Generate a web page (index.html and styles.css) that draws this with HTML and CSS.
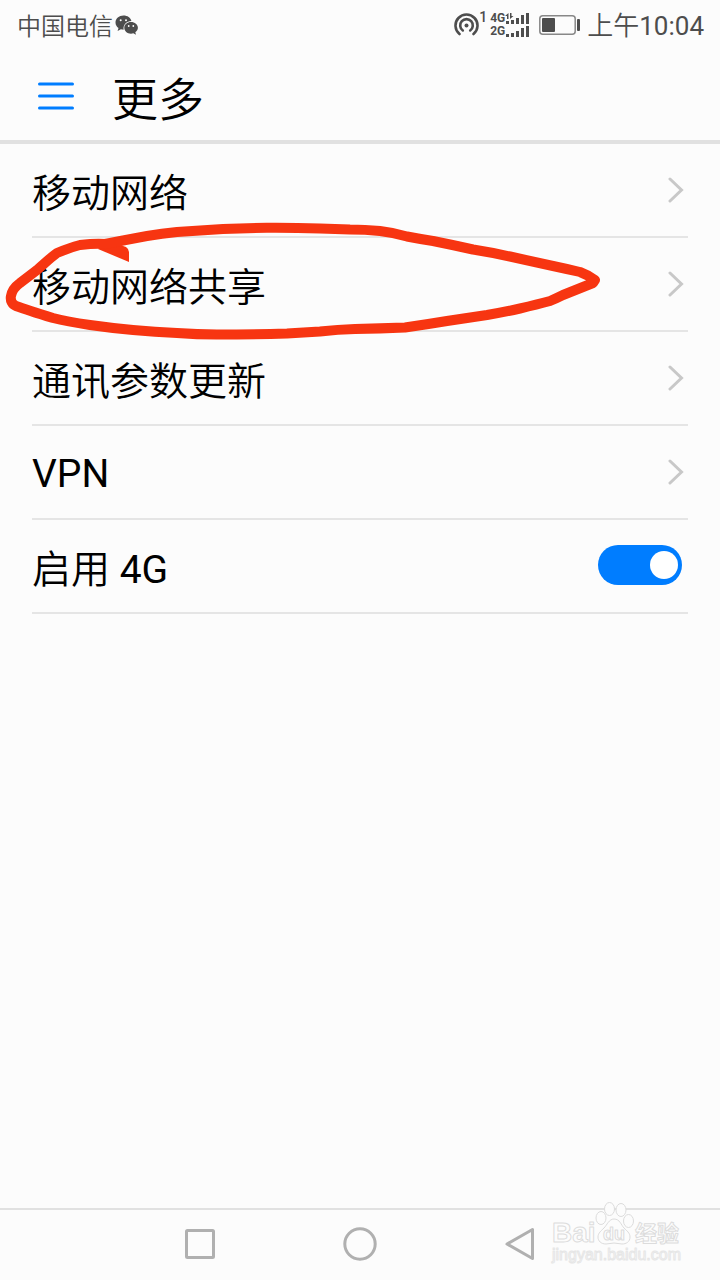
FILE: index.html
```html
<!DOCTYPE html>
<html lang="zh-CN">
<head>
<meta charset="utf-8">
<meta name="viewport" content="width=device-width, initial-scale=1">
<title>更多</title>
<link rel="stylesheet" href="styles.css">
</head>
<body>
<div class="screen">
  <div class="status">
    <div class="status-left">
      <span class="carrier">中国电信</span>
      <svg class="wechat" width="24" height="20" viewBox="0 0 24 20" aria-hidden="true">
        <path fill="#4d4d4d" d="M8.500 0.500C4 0.500 0.500 3.500 0.500 7.500c0 2.300 1.100 4.200 3 5.500L2.600 16l3.300-1.700c.9.300 1.800.4 2.700.4C8 9.500 11.500 6 16.400 6C15.600 2.700 12.500.5 8.500.5z"/>
        <path fill="#4d4d4d" d="M16 7c-3.800 0-6.700 2.500-6.700 5.800s2.900 5.900 6.700 5.900c.8 0 1.600-.1 2.300-.4l2.700 1.500-.7-2.600c1.600-1.100 2.600-2.700 2.600-4.500C22.900 9.500 19.800 7 16 7z"/>
        <g fill="#fcfcfc"><circle cx="5.700" cy="5.300" r="1"/><circle cx="11" cy="5.300" r="1"/><circle cx="13.700" cy="11" r=".9"/><circle cx="18.300" cy="11" r=".9"/></g>
      </svg>
    </div>
    <div class="status-right">
      <svg class="hotspot" width="25" height="24" viewBox="0 0 25 24" fill="none" stroke="#4d4d4d" stroke-width="2.600" stroke-linecap="round" aria-hidden="true">
        <path d="M5.500 21a11 11 0 1 1 14 0"/><path d="M8.800 17.500a6.300 6.300 0 1 1 7.400 0"/><circle cx="12.500" cy="12.500" r="2" fill="#4d4d4d" stroke="none"/>
      </svg>
      <span class="slot">1</span>
      <div class="networks">
        <div class="network"><span>4G</span>
          <svg width="24" height="11" viewBox="0 0 24 11" fill="#4d4d4d" aria-hidden="true"><path d="M3.500 0v6h-1.500V3H0zM5 0v6L8.500 3H6.500V0z"/><rect x="1" y="8" width="3" height="3"/><rect x="6" y="7" width="3" height="4"/><rect x="11" y="5" width="3" height="6"/><rect x="16" y="2" width="3" height="9"/><rect x="21" y="0" width="3" height="11"/></svg>
        </div>
        <div class="network"><span>2G</span>
          <svg width="24" height="11" viewBox="0 0 24 11" fill="#4d4d4d" aria-hidden="true"><rect x="1" y="8" width="3" height="3"/><rect x="6" y="7" width="3" height="4"/><rect x="11" y="5" width="3" height="6"/><rect x="16" y="2" width="3" height="9"/><rect x="21" y="0" width="3" height="11"/></svg>
        </div>
      </div>
      <svg class="battery" width="42" height="20" viewBox="0 0 42 20" aria-hidden="true">
        <rect x=".8" y=".8" width="35.400" height="18.400" rx="3" fill="none" stroke="#888" stroke-width="1.500"/><rect x="3" y="3" width="13" height="14" rx="1" fill="#4d4d4d"/><rect x="38" y="4" width="3" height="12" rx="1" fill="#4d4d4d"/>
      </svg>
      <time class="time"><span class="cjk">上午</span>10:04</time>
    </div>
  </div>
  <header class="header">
    <button class="menu" type="button" aria-label="菜单">
      <svg width="36" height="28" viewBox="0 0 36 28" stroke="#007dff" stroke-width="3" stroke-linecap="round" aria-hidden="true"><path d="M1.500 2h33M1.500 14h33M1.500 26h33"/></svg>
    </button>
    <h1 class="title">更多</h1>
  </header>
  <main class="list">
    <a class="row" href="#mobile"><span class="name cjk">移动网络</span><svg class="chevron" width="16" height="26" viewBox="0 0 16 26" aria-hidden="true"><path d="M2 2l11.500 11L2 24"/></svg></a>
    <a class="row" href="#sharing"><span class="name cjk">移动网络共享</span><svg class="chevron" width="16" height="26" viewBox="0 0 16 26" aria-hidden="true"><path d="M2 2l11.500 11L2 24"/></svg>
      <svg class="marker" width="604" height="128" viewBox="0 215 604 128" aria-hidden="true"><path d="M129 262L98 249L106 240L126 247Q129 249 129 252z" fill="#f73511" stroke="none"/><path d="M106 244C96 243 88 244 80 245C72 247 64 250 57 253C50 258 44 264 37 270L20 283C9 291 8 303 16 306C27 310 40 314 53 318C65 321 77 323 90 325Q111 328 133 330Q155 332 177 333Q197 334.500 217 334.500Q252 334.500 287 333.500Q304 332.500 320 331.500Q338 329.500 355 329Q380 328.500 405 327.500Q426 324.500 447 321Q467 318 487 315Q504 312 520 308.500Q537 304.500 550 301Q557 298 563 295L593 283L595 280Q588 275 580 272Q567 269 553 266L510 256.500Q492 252.500 473 249.500Q453 245 433 241Q420 239 407 236.500Q393 232.500 380 231Q365 229.500 350 229.500L320 228.500Q293 227.500 267 227.700Q245 228 223 229L177 232Q162 233.500 147 236L123 240.500L100 245"/></svg>
    </a>
    <a class="row" href="#params"><span class="name cjk">通讯参数更新</span><svg class="chevron" width="16" height="26" viewBox="0 0 16 26" aria-hidden="true"><path d="M2 2l11.500 11L2 24"/></svg></a>
    <a class="row" href="#vpn"><span class="name">VPN</span><svg class="chevron" width="16" height="26" viewBox="0 0 16 26" aria-hidden="true"><path d="M2 2l11.500 11L2 24"/></svg></a>
    <label class="row" for="lte"><span class="name"><span class="cjk">启用</span> 4G</span><input class="switch" id="lte" type="checkbox" role="switch" checked></label>
  </main>
  <nav class="nav">
    <button type="button" aria-label="最近任务"><svg width="36" height="36" viewBox="0 0 36 36"><rect x="4.500" y="4.500" width="27" height="27" rx="1"/></svg></button>
    <button type="button" aria-label="主屏幕"><svg width="36" height="36" viewBox="0 0 36 36"><circle cx="18" cy="18" r="15.200"/></svg></button>
    <button type="button" aria-label="返回"><svg width="36" height="36" viewBox="0 0 36 36"><path d="M30.500 3.500V32.500L5 18z"/></svg></button>
    <svg class="watermark" width="140" height="68" viewBox="0 0 140 68" role="img" aria-label="Baidu经验">
      <g class="mark-shape"><ellipse cx="53" cy="18" rx="5" ry="6.500"/><ellipse cx="61.500" cy="9" rx="5" ry="6.500"/><ellipse cx="73" cy="10" rx="5" ry="6.500"/><ellipse cx="80.500" cy="21" rx="5" ry="6.500"/><path d="M66 19c6 0 7 6 10 9s6 5 6 9c0 5-4 7-8 7-3 0-5-1-8-1s-5 1-8 1c-5 0-8-3-8-7s3-6 6-9 5-9 10-9z"/></g>
      <text class="mark-brand" x="4" y="42">Bai</text><text class="mark-du" x="55" y="40">du</text><text class="mark-cn" x="87" y="41">经验</text><text class="mark-url" x="4" y="60">jingyan.baidu.com</text>
    </svg>
  </nav>
</div>
</body>
</html>
```
FILE: styles.css
```css
* { box-sizing: border-box; }
body {
  margin: 0;
  background: #fcfcfc;
  color: #000;
  font-family: Roboto, "Noto Sans CJK SC", sans-serif;
}
button { border: 0; padding: 0; background: none; display: flex; align-items: center; justify-content: center; }
svg { display: block; flex: none; }
.cjk { font-family: "Noto Sans CJK SC", sans-serif; font-weight: 350; }
.screen { min-height: 100vh; display: flex; flex-direction: column; overflow: hidden; }
.status {
  height: 52px;
  padding: 0 16px 0 17px;
  display: flex;
  align-items: center;
  justify-content: space-between;
  color: #4d4d4d;
}
.status-left, .status-right { display: flex; align-items: center; height: 50px; align-self: flex-start; }
.carrier { font-family: "Noto Sans CJK SC", sans-serif; font-size: 24px; font-weight: 350; line-height: 32px; margin-right: 2px; }
.slot { font-size: 14px; font-weight: 500; line-height: 16px; align-self: flex-start; margin: 9px 3px 0 0; }
.networks { display: grid; gap: 2px; margin-right: 10px; }
.network { display: flex; font-size: 12px; font-weight: 700; line-height: 11px; }
.battery { margin-right: 6px; }
.time { font-size: 26px; line-height: 36px; }
.header {
  height: 92px;
  padding: 0 38px;
  display: flex;
  align-items: center;
  gap: 38px;
  border-bottom: 4px solid #e1e1e1;
}
.title { margin: 0; font-family: "Noto Sans CJK SC", sans-serif; font-size: 46px; font-weight: 350; line-height: 64px; }
.list { flex: 1; padding: 0 32px; }
.row {
  position: relative;
  height: 94px;
  display: flex;
  align-items: center;
  justify-content: space-between;
  border-bottom: 2px solid #e5e5e5;
  color: #000;
  font-size: 39px;
  text-decoration: none;
}
.name { padding-top: 3px; line-height: 46px; }
.name.cjk { padding-top: 0; }
.chevron { margin-right: 4px; fill: none; stroke: #c8c8c8; stroke-width: 3; stroke-linecap: round; }
.marker { position: absolute; left: -32px; top: -23px; fill: none; stroke: #f73511; stroke-width: 10; stroke-linejoin: round; pointer-events: none; }
.switch {
  appearance: none;
  width: 84px;
  height: 40px;
  margin: 0 6px 2px 0;
  padding: 0 4px;
  border-radius: 20px;
  background: #007dff;
  display: flex;
  align-items: center;
}
.switch::before { content: ""; width: 28px; height: 28px; border-radius: 50%; background: #fff; }
.switch:checked { justify-content: flex-end; }
.nav {
  position: relative;
  height: 72px;
  padding-bottom: 2px;
  display: flex;
  justify-content: center;
  border-top: 2px solid #e1e1e1;
}
.nav button { width: 160px; }
.nav button svg { fill: none; stroke: #b0b0b0; stroke-width: 3; stroke-linejoin: round; }
.watermark { position: absolute; right: 32px; top: -10px; font-family: "Liberation Sans", "Noto Sans CJK SC", sans-serif; stroke-linejoin: round; }
.mark-shape, .watermark text { fill: #fcfcfc; stroke: #dcdcdc; stroke-width: 1; }
.watermark .mark-brand { font-size: 28px; font-weight: 700; }
.watermark .mark-du { font-size: 18px; font-weight: 700; }
.watermark .mark-cn { font-size: 22px; font-weight: 700; }
.watermark .mark-url { font-size: 16px; stroke: #e6e6e6; }
```
